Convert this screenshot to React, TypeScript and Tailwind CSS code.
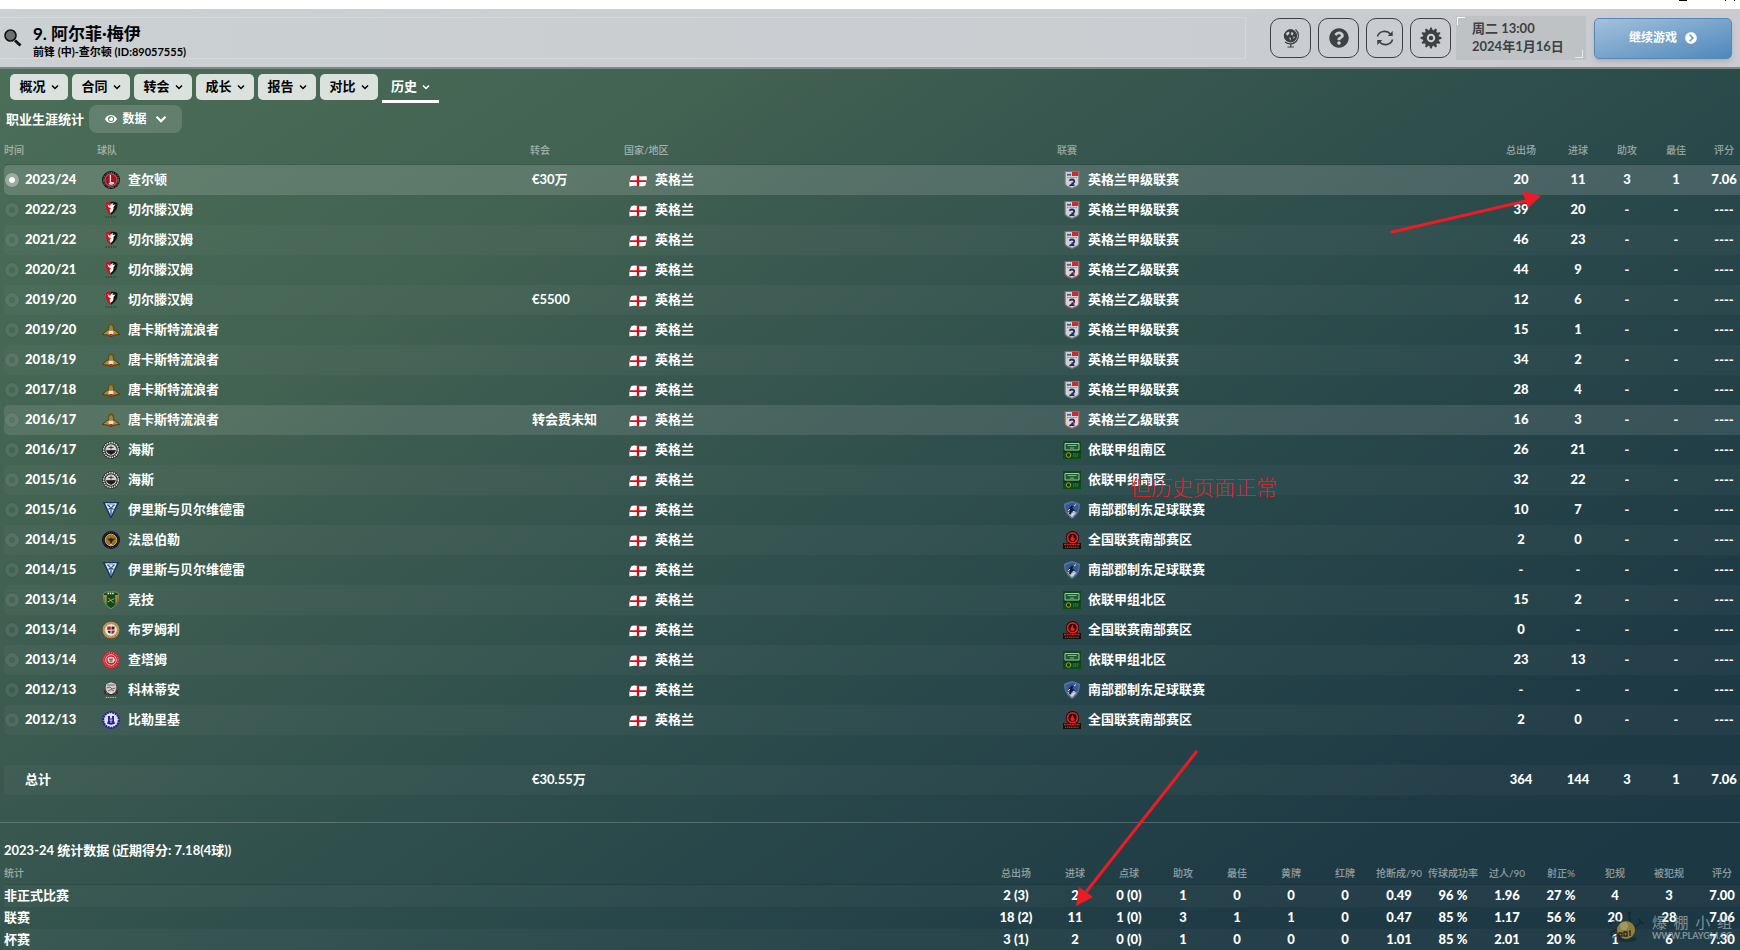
import React from 'react';
import { FaChevronCircleRight, FaEye, FaQuestionCircle } from 'react-icons/fa';

type Career = {
  season: string;
  team: string;
  badge: string;
  fee?: string;
  league: string;
  crest: string;
  apps: string;
  goals: string;
  assists?: string;
  best?: string;
  rating?: string;
};

const careers: Career[] = [
  { season: '2023/24', team: '查尔顿', badge: 'charlton', fee: '€30万', league: '英格兰甲级联赛', crest: 'efl1', apps: '20', goals: '11', assists: '3', best: '1', rating: '7.06' },
  { season: '2022/23', team: '切尔滕汉姆', badge: 'cheltenham', league: '英格兰甲级联赛', crest: 'efl1', apps: '39', goals: '20' },
  { season: '2021/22', team: '切尔滕汉姆', badge: 'cheltenham', league: '英格兰甲级联赛', crest: 'efl1', apps: '46', goals: '23' },
  { season: '2020/21', team: '切尔滕汉姆', badge: 'cheltenham', league: '英格兰乙级联赛', crest: 'efl2', apps: '44', goals: '9' },
  { season: '2019/20', team: '切尔滕汉姆', badge: 'cheltenham', fee: '€5500', league: '英格兰乙级联赛', crest: 'efl2', apps: '12', goals: '6' },
  { season: '2019/20', team: '唐卡斯特流浪者', badge: 'doncaster', league: '英格兰甲级联赛', crest: 'efl1', apps: '15', goals: '1' },
  { season: '2018/19', team: '唐卡斯特流浪者', badge: 'doncaster', league: '英格兰甲级联赛', crest: 'efl1', apps: '34', goals: '2' },
  { season: '2017/18', team: '唐卡斯特流浪者', badge: 'doncaster', league: '英格兰甲级联赛', crest: 'efl1', apps: '28', goals: '4' },
  { season: '2016/17', team: '唐卡斯特流浪者', badge: 'doncaster', fee: '转会费未知', league: '英格兰乙级联赛', crest: 'efl2', apps: '16', goals: '3' },
  { season: '2016/17', team: '海斯', badge: 'hayes', league: '依联甲组南区', crest: 'isthmian', apps: '26', goals: '21' },
  { season: '2015/16', team: '海斯', badge: 'hayes', league: '依联甲组南区', crest: 'isthmian', apps: '32', goals: '22' },
  { season: '2015/16', team: '伊里斯与贝尔维德雷', badge: 'erith', league: '南部郡制东足球联赛', crest: 'counties', apps: '10', goals: '7' },
  { season: '2014/15', team: '法恩伯勒', badge: 'farnborough', league: '全国联赛南部赛区', crest: 'national', apps: '2', goals: '0' },
  { season: '2014/15', team: '伊里斯与贝尔维德雷', badge: 'erith', league: '南部郡制东足球联赛', crest: 'counties', apps: '-', goals: '-' },
  { season: '2013/14', team: '竞技', badge: 'vcd', league: '依联甲组北区', crest: 'isthmian', apps: '15', goals: '2' },
  { season: '2013/14', team: '布罗姆利', badge: 'bromley', league: '全国联赛南部赛区', crest: 'national', apps: '0', goals: '-' },
  { season: '2013/14', team: '查塔姆', badge: 'chatham', league: '依联甲组北区', crest: 'isthmian', apps: '23', goals: '13' },
  { season: '2012/13', team: '科林蒂安', badge: 'corinthian', league: '南部郡制东足球联赛', crest: 'counties', apps: '-', goals: '-' },
  { season: '2012/13', team: '比勒里基', badge: 'billericay', league: '全国联赛南部赛区', crest: 'national', apps: '2', goals: '0' },
];

const tabs = ['概况', '合同', '转会', '成长', '报告', '对比'];

const statHeads = ['进球', '点球', '助攻', '最佳', '黄牌', '红牌', '抢断成/90', '传球成功率', '过人/90', '射正%', '犯规', '被犯规'];

const stats = [
  { name: '非正式比赛', apps: '2 (3)', values: ['2', '0 (0)', '1', '0', '0', '0', '0.49', '96 %', '1.96', '27 %', '4', '3'], rating: '7.00' },
  { name: '联赛', apps: '18 (2)', values: ['11', '1 (0)', '3', '1', '1', '0', '0.47', '85 %', '1.17', '56 %', '20', '28'], rating: '7.06' },
  { name: '杯赛', apps: '3 (1)', values: ['2', '0 (0)', '1', '0', '0', '0', '1.01', '85 %', '2.01', '20 %', '1', '6'], rating: '7.30' },
];

const Chevron = ({ className = 'h-2 w-2' }: { className?: string }) => (
  <svg className={`shrink-0 ${className}`} viewBox="0 0 8 8" fill="none" stroke="currentColor" strokeWidth="1.5" aria-hidden="true">
    <path d="M1 2.5 4 5.5 7 2.5" />
  </svg>
);

const badgeArt: Record<string, React.ReactNode> = {
  charlton: (
    <>
      <circle cx="9" cy="9" r="9" fill="#14100f" />
      <circle cx="9" cy="9" r="7.6" fill="none" stroke="#8d8784" strokeWidth="1" strokeDasharray="1 1.2 1.4 .8" strokeDashoffset="2" />
      <circle cx="9" cy="9" r="6.2" fill="#a5121a" stroke="#cfc4c0" strokeWidth=".6" />
      <path d="M8.4 4v7.6h3.4M7 12.6c1 .8 4 .8 5-.4" fill="none" stroke="#f1dedb" strokeWidth="1.3" />
    </>
  ),
  cheltenham: (
    <>
      <path d="M4 1.6c2-.9 3-.9 5-.9v13C6 12 4 9 4 6z" fill="#c4141d" />
      <path d="M9 .8c3 0 4 .2 6.4 1.2C16 7 13.5 11 9 13.7z" fill="#121212" />
      <path d="M5.5 3 8 5l1-2 2.500-1-1 2 3-.6-2 2.600c.5 3-1 5-3 6L7.500 9 9 7.500 6.500 6z" fill="#fff" />
      <path d="M3.500 16h11" stroke="#26372d" strokeWidth="1" strokeDasharray="1.500 1" />
    </>
  ),
  doncaster: (
    <>
      <path d="M0 13.500 5.500 9 7 10.500 9 8l2 2.500L12.500 9 18 13.500 13 14l-4 1.500L5 14z" fill="#ab8b24" stroke="#4d3c0d" strokeWidth="1" />
      <path d="M6.500 9.500C6 7 7 4 9 3.500c2 .5 3 3.500 2.500 6z" fill="#a48322" stroke="#4a3a10" strokeWidth=".8" />
      <path d="M6.500 5C7.500 2 10.500 2 11.500 5" fill="none" stroke="#6d5716" strokeWidth="1.500" />
      <path d="M6.500 9.500h5v3L9 14.500l-2.500-2z" fill="#e3e0de" />
      <path d="m7 13 2 2.500 2-2.500z" fill="#cf1b26" />
    </>
  ),
  hayes: (
    <>
      <circle cx="9" cy="9" r="8.700" fill="#161716" />
      <circle cx="9" cy="9" r="7.300" fill="none" stroke="#d6d6d6" strokeWidth="1.700" strokeDasharray="1.600 .7" />
      <circle cx="9" cy="9" r="5.700" fill="#d2d3d2" />
      <path d="M9 4.500v4M6.500 6.500h5M4.500 9.600h9L12 12l-3 1.500L6 12z" fill="#1d1e1d" stroke="#1d1e1d" strokeWidth=".8" />
    </>
  ),
  erith: (
    <>
      <path d="M.5 1h17L9.600 17H8.400z" fill="#1b3461" />
      <path d="M3 2.300h12L9 15z" fill="#e9eef3" />
      <path d="M5.500 3.500 8 6M12.500 3.500 10 6M9 6v9M6.500 8.500 9 6.500l2.500 2" fill="none" stroke="#2a5795" strokeWidth="1.300" />
      <path d="M7 3h4" stroke="#7e8691" strokeWidth="1" />
    </>
  ),
  farnborough: (
    <>
      <circle cx="9" cy="9" r="9" fill="#11102a" />
      <circle cx="9" cy="9" r="7.700" fill="none" stroke="#676052" strokeWidth=".6" strokeDasharray="1 1" />
      <circle cx="9" cy="9" r="5.800" fill="#9c7424" stroke="#d5a63d" strokeWidth="1" />
      <path d="m5 7.500 3 .2 1-1.200 1 1.200 3.500-.2-3 2.500L9 13 7.700 10z" fill="#221c1d" />
      <path d="M8 13h2l-1 1.500z" fill="#f3e5c0" />
    </>
  ),
  vcd: (
    <>
      <path d="M1.500 2.500 4 1h10l2.500 1.500C17 9 15.500 14 9 17.700 2.500 14 1 9 1.500 2.500z" fill="#0f4b22" stroke="#9e9a55" strokeWidth=".8" />
      <path d="M2 4c0 4 1 7 2.500 9.500L4.800 4zM16 4c0 4-1 7-2.500 9.500L13.200 4z" fill="#b28a3e" />
      <path d="M5.500 2.500h7" stroke="#e8ead1" strokeWidth="1.300" strokeDasharray="1.500 .8" />
      <path d="m5.500 11 4-2 3-1.500M6.500 7l5 5" stroke="#c79d51" strokeWidth="1" />
    </>
  ),
  bromley: (
    <>
      <circle cx="9" cy="9" r="8.800" fill="#c7a269" stroke="#4e3519" strokeWidth=".6" />
      <circle cx="9" cy="9" r="7.200" fill="none" stroke="#6e4c23" strokeWidth=".7" strokeDasharray="1 .9" />
      <circle cx="9" cy="9" r="5.800" fill="#eeeae6" />
      <path d="M5.500 5.500h3.300v3.300H5zM9.500 9.500H13c-.3 2-1.500 3.300-3.500 3.600z" fill="#b42128" />
      <path d="M9.500 5.500h3v3h-3zM5.500 9.700h3v2.800L6.500 12z" fill="#2a2424" />
    </>
  ),
  chatham: (
    <>
      <circle cx="9" cy="9" r="8.900" fill="#c32631" />
      <circle cx="9" cy="9" r="7.200" fill="none" stroke="#e6a8a9" strokeWidth=".9" strokeDasharray="1 1.100" />
      <circle cx="9" cy="9" r="5.300" fill="#c32631" stroke="#f4dcdb" strokeWidth=".8" />
      <path d="M6 6.500c2-1 4-1 6 0L13 9l-1.500 2.700H7L5.500 9z" fill="#ecd5d2" />
      <path d="M7 8.200h4M7.500 10h3" stroke="#6a2226" strokeWidth="1" />
    </>
  ),
  corinthian: (
    <>
      <path d="M4 2.500 9 .8l5 1.700 1 4.500-2 5.500H5L3 7z" fill="#cfcfcd" stroke="#3d3434" strokeWidth=".8" />
      <path d="M5 4h8M4.500 7 8 6l2 2 3.500-1M6 10l3-1.500 3 1.500" stroke="#6f6b6b" strokeWidth="1" fill="none" />
      <path d="m1.500 8 4 4.500h7l4-4.500-1 5.500-6.500 1-6.500-1z" fill="#263b30" />
      <circle cx="5" cy="12" r="1" fill="#d22b3c" />
      <circle cx="13" cy="12" r="1" fill="#d22b3c" />
      <path d="M7 13 9 10.500l2 2.500z" fill="#dcdcda" />
      <path d="M3.500 16.500h11" stroke="#a9b2ad" strokeWidth="1" strokeDasharray="1.500 .8" />
    </>
  ),
  billericay: (
    <>
      <circle cx="9" cy="9" r="7.800" fill="#e1e3f1" stroke="#241e98" strokeWidth="2.200" strokeDasharray="2 .7" />
      <circle cx="9" cy="9" r="6.300" fill="#e1e3f1" />
      <path d="M6 5h2v2.500h2V5h2v5l1 2.500c-2 1.500-6 1.500-8 0L6 10z" fill="#2520a0" />
      <path d="M7.500 9h3M9 9v3" stroke="#e1e3f1" strokeWidth=".9" />
    </>
  ),
  efl1: (
    <>
      <path d="M1.500 0h15v12.500c0 3-4 4-7.500 5.500-3.500-1.500-7.500-2.500-7.500-5.500z" fill="#74797b" />
      <path d="M2.700 1h12.600v11.300c0 2.300-3.300 3.200-6.300 4.500-3-1.300-6.300-2.200-6.300-4.500z" fill="#cfd2d2" />
      <path d="M9 1h6.300v4H9z" fill="#cb2a2f" />
      <path d="m3.800 4.500 1-2 1.300 1.200 1.200-1.500 1 2.300z" fill="#27347b" />
      <path d="M4 6.500h10" stroke="#8a8f92" strokeWidth="1" strokeDasharray="1 .5" />
      <path d="M6.800 9.800C7 8 11 8 11.200 10.200c.1 1.600-1.600 2.300-2.600 2M6.500 14.800l2-1 3 .5" fill="none" stroke="#222c63" strokeWidth="1.800" />
    </>
  ),
  efl2: (
    <>
      <path d="M1.500 0h15v12.500c0 3-4 4-7.500 5.500-3.500-1.500-7.500-2.500-7.500-5.500z" fill="#99605f" />
      <path d="M2.700 1h12.600v11.300c0 2.300-3.300 3.200-6.300 4.500-3-1.300-6.300-2.200-6.300-4.500z" fill="#d9d5d3" />
      <path d="M9 1h6.300v4H9z" fill="#cb2a2f" />
      <path d="m3.800 4.500 1-2 1.300 1.200 1.200-1.500 1 2.300z" fill="#27347b" />
      <path d="M4 6.500h10" stroke="#c56c6c" strokeWidth="1" strokeDasharray="1 .5" />
      <path d="M6.800 9.800C7 8 11 8 11.200 10.200c.1 1.600-1.600 2.300-2.600 2M6.500 14.800l2-1 3 .5" fill="none" stroke="#222c63" strokeWidth="1.800" />
      <path d="m10 12.500 1.500-1.500" fill="none" stroke="#c3343a" strokeWidth="1.800" />
    </>
  ),
  isthmian: (
    <>
      <path d="M0 0h18v18H0z" fill="#0a4a1b" />
      <path d="M0 10h18v2H0z" fill="#083a16" />
      <path d="M2 2.500h14v6.500H2z" fill="#1d5c2f" stroke="#a9bfab" strokeWidth="1" />
      <path d="M4.500 4.500h9M7 7h4" stroke="#8fae94" strokeWidth="1.200" />
      <circle cx="5.500" cy="14" r="2.300" fill="#16320f" stroke="#a2a532" strokeWidth="1" />
      <path d="M10 13h5.500M10 15h5" stroke="#4a8255" strokeWidth="1" strokeDasharray="1.500 .5" />
    </>
  ),
  counties: (
    <>
      <path d="M1 3 4 1.500 9 0l5 1.500L17 3c0 7-2.500 11.500-8 15C3.500 14.500 1 10 1 3z" fill="#5b7193" />
      <path d="M2.500 4 9 1.500 15.500 4c0 3-.5 5-1.500 7H4c-1-2-1.500-4-1.500-7z" fill="#345a9e" />
      <path d="M4.500 11.500h9L9 16.500z" fill="#c5d2e3" />
      <path d="m8.500 4.500 2 .5-1 2.500 2.500 2-3 .5-1 3.500-2-.5L7 9 5.500 8z" fill="#141c30" />
      <path d="m5 10 2-2M11 5l2-1.500M10 10.500l2 .5" stroke="#dbe4ef" strokeWidth="1" />
    </>
  ),
  national: (
    <>
      <circle cx="9.500" cy="6.800" r="6.700" fill="#170b0b" />
      <circle cx="9.500" cy="6.800" r="5" fill="none" stroke="#e8211d" strokeWidth="1.800" />
      <path d="M10 3.200 7.300 7.500c0 2 1 2.500 2.500 2.500 2.200 0 2.700-2.500.7-3.500z" fill="#e5231d" />
      <path d="M0 12h18v6H0z" fill="#150e0e" />
      <path d="M1 13.500h16" stroke="#d5201d" strokeWidth="1.600" strokeDasharray="2.200 .4" />
      <path d="M2 16.200h14" stroke="#7b7373" strokeWidth="1" strokeDasharray="1.300 .6" />
    </>
  ),
};

const Badge = ({ name }: { name: string }) => (
  <svg className="h-[18px] w-[18px] shrink-0" viewBox="0 0 18 18" fill="none" aria-hidden="true">
    {badgeArt[name]}
  </svg>
);

const Flag = () => (
  <svg className="mt-0.5 h-3 w-[18px] shrink-0" viewBox="0 0 18 12" aria-hidden="true">
    <path d="M1.500 3C2 1.200 3 .8 5 .6c3-.2 5 .8 8 .8 2 0 3-.2 5 .2l-.6 4-.9 4.800c-3 1.200-5.500 1-8 .6-3-.5-5-.4-8 .4-.6-2.400.2-6 1-8.400z" fill="#fff" />
    <path d="M7.800.8h2.400v10.400H7.800z" fill="#d2101b" />
    <path d="M.6 5.200h16.800v1.800H.5z" fill="#d2101b" />
  </svg>
);

const Globe = () => (
  <svg className="h-5 w-5" viewBox="0 0 20 20" fill="none" stroke="currentColor" aria-hidden="true">
    <circle cx="9.500" cy="7.800" r="6.200" fill="currentColor" />
    <path d="m5 5 3-1.500.5 2L6 8zM10.500 4l2 1-1 2.500-1.500-1zM8 9.500l2 .5-.5 2.500zM12.500 8.500l1.500.5-1.500 2z" fill="#cfd2d4" stroke="none" />
    <path d="M14.500 1.500A8 8 0 0 1 4 14M9.800 16v2.500M6.500 19h6.500" strokeWidth="1.200" />
  </svg>
);

const Sync = () => (
  <svg className="h-5 w-5" viewBox="0 0 20 20" fill="none" stroke="currentColor" strokeWidth="1.600" aria-hidden="true">
    <path d="M2.500 8.500C4 3 11.500 1.500 15.500 6M17.500 11.500C16 17 8.500 18.500 4.500 14" />
    <path d="M17.700 3v5h-5zM2.300 17v-5h5z" fill="currentColor" stroke="none" />
  </svg>
);

const Gear = () => (
  <svg className="h-[22px] w-[22px]" viewBox="0 0 22 22" aria-hidden="true">
    <g fill="currentColor">
      {[0, 30, 60, 90, 120, 150, 180, 210, 240, 270, 300, 330].map((deg) => (
        <path key={deg} d="M8.800 4.500 10.300.5h1.400l1.500 4z" transform={`rotate(${deg} 11 11)`} />
      ))}
      <circle cx="11" cy="11" r="7.800" />
    </g>
    <circle cx="11" cy="11" r="3.200" fill="none" stroke="#cfd2d4" strokeWidth="2" />
  </svg>
);

const Header = () => (
  <header className="flex h-[60px] shrink-0 items-center border-b-2 border-[#7d8783] bg-linear-to-r from-[#cbd0d2] to-[#c9cbd0] pr-2 text-[#3e4143]">
    <div className="flex h-[42px] min-w-0 flex-1 items-center border border-l-0 border-white/20 text-black">
      <button className="ml-1 shrink-0" aria-label="搜索">
        <svg className="h-[18px] w-[18px]" viewBox="0 0 18 18" aria-hidden="true">
          <circle cx="6.500" cy="6.500" r="5.500" fill="#6c6f70" stroke="#111" strokeWidth="1.600" />
          <path d="m11 11.500 5.500 5" stroke="#111" strokeWidth="3" />
        </svg>
      </button>
      <div className="ml-[11px] whitespace-nowrap pt-2 font-bold">
        <h1 className="text-[17px] leading-5">9. 阿尔菲·梅伊</h1>
        <p className="text-[11px] leading-4">前锋 (中)-查尔顿 (ID:89057555)</p>
      </div>
    </div>
    <div className="ml-6 flex shrink-0 items-center gap-[7px]">
      <button className="flex h-10 w-[41px] items-center justify-center rounded-[10px] border border-[#3e4143]" aria-label="世界">
        <Globe />
      </button>
      <button className="flex h-10 w-[41px] items-center justify-center rounded-[10px] border border-[#3e4143]" aria-label="帮助">
        <FaQuestionCircle className="h-5 w-5" />
      </button>
      <button className="flex h-10 w-[37px] items-center justify-center rounded-[10px] border border-[#3e4143]" aria-label="同步">
        <Sync />
      </button>
      <button className="flex h-10 w-[41px] items-center justify-center rounded-[10px] border border-[#3e4143]" aria-label="设置">
        <Gear />
      </button>
    </div>
    <div className="relative ml-[5px] h-11 w-[130px] shrink-0 bg-[#bfc2c5] py-[3px] pl-4 text-[13px] font-bold leading-[18px]">
      <span className="absolute left-px top-px h-2 w-2 border-l border-t border-white" />
      <span className="absolute bottom-0.5 right-[3px] h-2 w-2 border-b border-r border-white/60" />
      <p>周二 13:00</p>
      <p>2024年1月16日</p>
    </div>
    <button className="ml-2 flex h-[41px] w-[138px] shrink-0 items-center justify-center gap-2 rounded-[5px] border border-[#5788b5] bg-linear-to-br from-[#a4c1dc] to-[#4c88bb] text-xs font-bold text-white shadow-md">
      继续游戏
      <FaChevronCircleRight className="h-3 w-3" />
    </button>
  </header>
);

const Nav = () => (
  <nav className="flex shrink-0 gap-1 pl-[10px] pt-[5px] text-[13px] font-bold">
    {tabs.map((tab) => (
      <button key={tab} className="flex h-[26px] w-[58px] items-center justify-center gap-[5px] rounded-[5px] bg-[#dbe2de] text-black">
        {tab}
        <Chevron />
      </button>
    ))}
    <button className="flex h-[29px] w-[57px] items-center justify-center gap-[5px] border-b-[3px] border-white text-white">
      历史
      <Chevron />
    </button>
  </nav>
);

const rowColor = (i: number) => {
  if (i === 0) return '*:bg-white/14';
  if (i === 8) return '*:bg-white/10';
  return i % 2 === 0 ? '*:bg-white/3' : '';
};

const CareerTable = () => (
  <div className="shrink-0 pl-1">
    <table className="w-full table-fixed border-separate border-spacing-0 whitespace-nowrap text-[13px] font-bold text-white">
      <colgroup>
        <col className="w-[92px]" />
        <col className="w-1/4" />
        <col className="w-[92px]" />
        <col className="w-1/4" />
        <col />
        <col className="w-[50px]" />
        <col className="w-[64px]" />
        <col className="w-[34px]" />
        <col className="w-[64px]" />
        <col className="w-[32px]" />
      </colgroup>
      <thead className="text-[10px] text-white/50">
        <tr className="h-8 text-left *:border-b *:border-black/10 *:p-0 *:pt-1 *:font-medium">
          <th>时间</th>
          <th>
            <span className="pl-px">球队</span>
          </th>
          <th>转会</th>
          <th>
            <span className="pl-0.5">国家/地区</span>
          </th>
          <th>
            <span className="pl-px">联赛</span>
          </th>
          <th className="text-center">总出场</th>
          <th className="text-center">进球</th>
          <th className="text-center">助攻</th>
          <th className="text-center">最佳</th>
          <th className="text-center">评分</th>
        </tr>
      </thead>
      <tbody>
        {careers.map((row, i) => (
          <tr key={i} className={`h-[30px] *:p-0 *:first:rounded-l-[5px] ${rowColor(i)}`}>
            <td className="font-black">
              <label className="flex items-center gap-[6px] pl-px">
                <input
                  type="radio"
                  name="season"
                  defaultChecked={i === 0}
                  className="h-[14px] w-[14px] shrink-0 appearance-none rounded-full border-4 border-white/8 outline outline-black/5 checked:border-white/35 checked:bg-white checked:bg-clip-padding"
                />
                {row.season}
              </label>
            </td>
            <td>
              <div className="flex items-center gap-2 pl-[6px]">
                <Badge name={row.badge} />
                {row.team}
              </div>
            </td>
            <td>
              <span className="pl-0.5">{row.fee}</span>
            </td>
            <td>
              <div className="flex items-center gap-2 pl-[7px]">
                <Flag />
                英格兰
              </div>
            </td>
            <td>
              <div className="flex items-center gap-[7px] pl-[7px]">
                <Badge name={row.crest} />
                {row.league}
              </div>
            </td>
            <td className="text-center font-black">{row.apps}</td>
            <td className="text-center font-black">{row.goals}</td>
            <td className="text-center font-black">{row.assists ?? '-'}</td>
            <td className="text-center font-black">{row.best ?? '-'}</td>
            <td className="text-center font-black">{row.rating ?? '----'}</td>
          </tr>
        ))}
      </tbody>
      <tfoot>
        <tr className="h-[30px]" aria-hidden="true">
          <td colSpan={10} />
        </tr>
        <tr className="h-[30px] *:bg-white/3 *:p-0">
          <td className="rounded-l-[5px]">
            <span className="pl-[21px]">总计</span>
          </td>
          <td />
          <td>
            <span className="pl-0.5">€30.55万</span>
          </td>
          <td />
          <td />
          <td className="text-center font-black">364</td>
          <td className="text-center font-black">144</td>
          <td className="text-center font-black">3</td>
          <td className="text-center font-black">1</td>
          <td className="text-center font-black">7.06</td>
        </tr>
      </tfoot>
    </table>
  </div>
);

const SeasonStats = () => (
  <section className="mt-[27px] shrink-0 border-t border-white/20 pl-1 pt-[15px] font-bold text-white">
    <h2 className="mb-px text-[13px] leading-6">2023-24 统计数据 (近期得分: 7.18(4球))</h2>
    <table className="w-full table-fixed border-separate border-spacing-0 whitespace-nowrap text-[13px]">
      <colgroup>
        <col />
        <col className="w-[64px]" />
        {statHeads.map((head) => (
          <col key={head} className="w-[54px]" />
        ))}
        <col className="w-[44px]" />
      </colgroup>
      <thead className="text-[10px] text-white/50">
        <tr className="h-[22px] *:border-b *:border-black/10 *:p-0 *:font-medium">
          <th className="text-left">统计</th>
          <th>总出场</th>
          {statHeads.map((head) => (
            <th key={head}>{head}</th>
          ))}
          <th>
            <span className="pl-2">评分</span>
          </th>
        </tr>
      </thead>
      <tbody>
        {stats.map((row) => (
          <tr key={row.name} className="h-[22px] text-center font-black odd:bg-white/3 *:p-0">
            <th className="text-left font-bold">{row.name}</th>
            <td>{row.apps}</td>
            {row.values.map((value, i) => (
              <td key={i}>{value}</td>
            ))}
            <td>
              <span className="pl-2">{row.rating}</span>
            </td>
          </tr>
        ))}
      </tbody>
    </table>
  </section>
);

const Notes = () => (
  <div className="pointer-events-none">
    <svg className="absolute left-[1388px] top-[188px] h-12 w-40" viewBox="0 0 160 48" aria-hidden="true">
      <path d="M4 44 138 13" stroke="#ed1c24" strokeWidth="3" strokeLinecap="round" />
      <path d="m153 8-19-5 6 17z" fill="#ed1c24" />
    </svg>
    <svg className="absolute left-[1072px] top-[748px] h-40 w-32" viewBox="0 0 128 160" aria-hidden="true">
      <path d="M125 3 14 144" stroke="#ed1c24" strokeWidth="3" />
      <path d="m4 158 3-19 14 10z" fill="#ed1c24" />
    </svg>
    <p className="absolute left-[1130px] top-[475px] whitespace-nowrap text-[21px] font-light leading-6 text-[#ed1c24]">但历史页面正常</p>
  </div>
);

const Watermark = () => (
  <div className="pointer-events-none absolute bottom-1 right-2 flex items-center gap-2 opacity-60">
    <svg className="h-9 w-9" viewBox="0 0 36 36" fill="none" aria-hidden="true">
      <path d="M14 14C8 8 4 12 2 14M22 12l-1-9 2-1M26 18l7-6-2-3M33 12l3 2M10 20c-6 0-9 4-6 6s6-1 7-3" stroke="#101c20" strokeWidth="1.500" />
      <ellipse cx="19" cy="29" rx="10" ry="3" fill="#12262d" />
      <circle cx="18" cy="20" r="9" fill="#e0ac2e" />
      <circle cx="16" cy="16" r="4" fill="#f5dc80" />
      <path d="M11 23h3v3h-3zM16 22h3v4h-3zM21 22l1-1v5" stroke="#1d1a10" strokeWidth="1.300" />
    </svg>
    <div className="text-center text-[#c3ccd0]">
      <p className="flex justify-between text-[15px] leading-4">
        <span>爆</span>
        <span>棚</span>
        <span>小</span>
        <span>组</span>
      </p>
      <p className="text-[9px] font-bold leading-3">WWW.PLAYGM.CC</p>
    </div>
  </div>
);

export default function App() {
  return (
    <div className="relative flex h-screen flex-col overflow-hidden bg-white font-['Lato','Noto_Sans_CJK_SC',sans-serif]">
      <div className="flex h-[9px] shrink-0 items-start justify-end gap-[38px] pr-[5px]">
        <span className="h-px w-2 bg-black" />
        <span className="h-px w-[10px] border-x border-black" />
      </div>
      <Header />
      <main className="flex min-h-0 flex-1 flex-col overflow-hidden bg-[linear-gradient(146deg,#4b6e57_0%,#426252_24%,#3b5a50_33%,#2f4f4c_50%,#28474a_62%,#1e3a45_83%,#1b3743_100%)]">
        <Nav />
        <div className="mt-[2px] flex shrink-0 items-center gap-[5px] pl-[6px] text-white">
          <h2 className="pt-0.5 text-[13px] font-bold">职业生涯统计</h2>
          <button className="flex h-7 w-[93px] items-center justify-center gap-[6px] rounded-lg bg-white/14 text-xs font-bold">
            <FaEye className="h-3 w-3" />
            数据
            <Chevron className="ml-0.5 h-3 w-3" />
          </button>
        </div>
        <CareerTable />
        <SeasonStats />
      </main>
      <Notes />
      <Watermark />
    </div>
  );
}
